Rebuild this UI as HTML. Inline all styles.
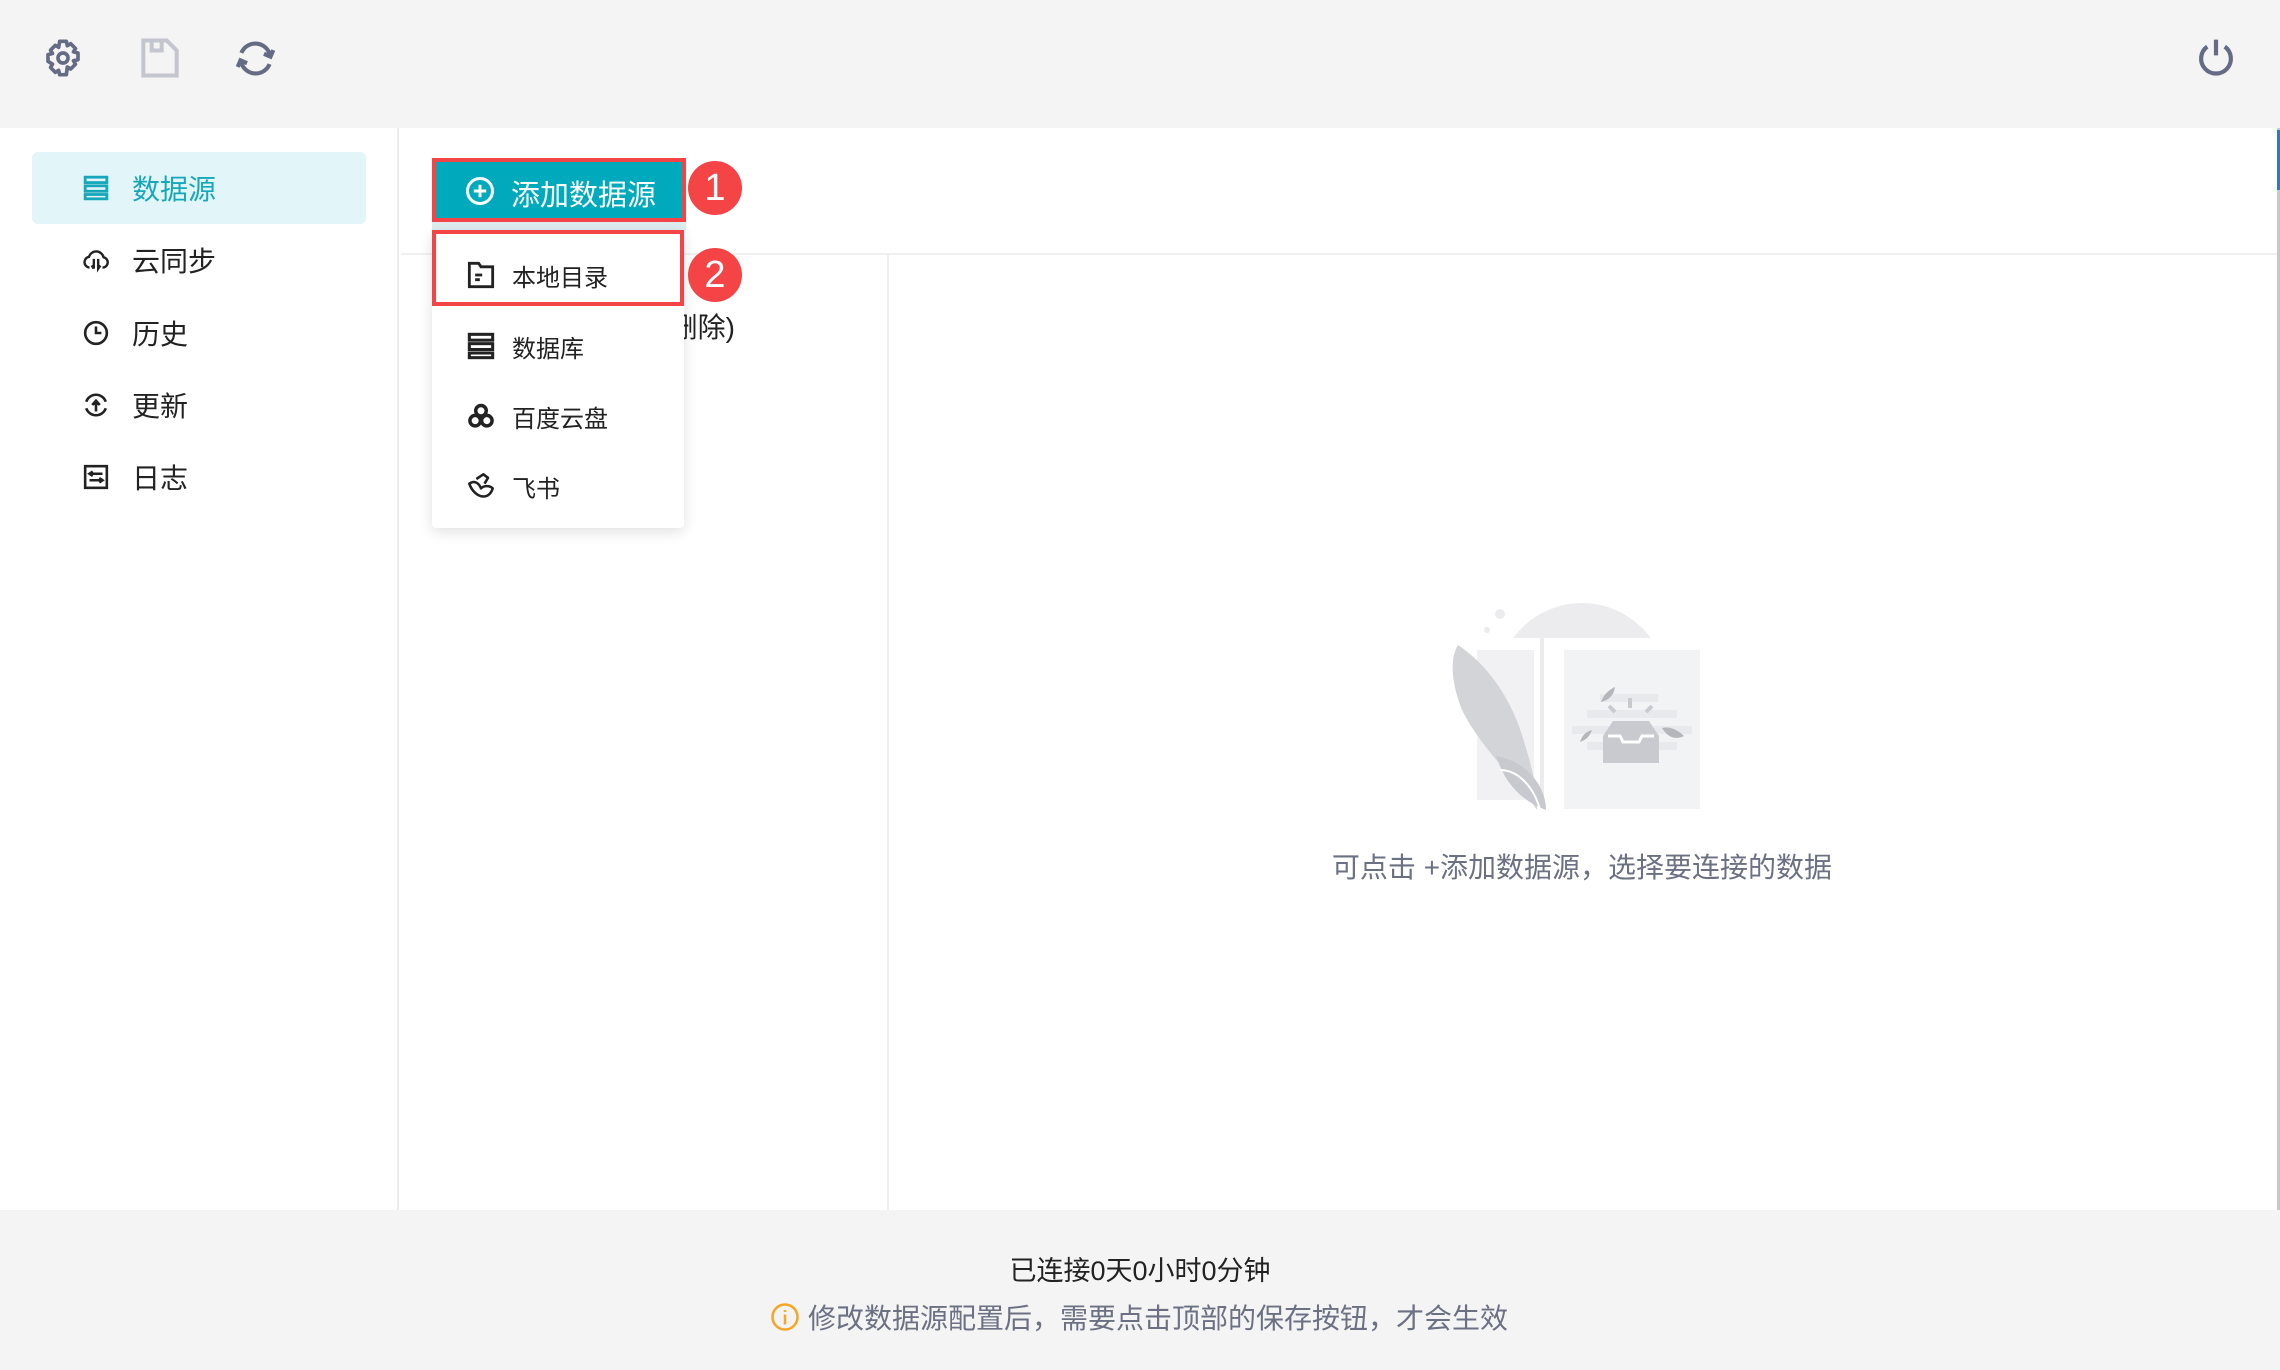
<!DOCTYPE html>
<html><head><meta charset="utf-8"><style>
*{margin:0;padding:0;box-sizing:border-box}
body{width:2280px;height:1370px;overflow:hidden;background:#fff;font-family:"Liberation Sans","Noto Sans CJK SC",sans-serif;position:relative}
.abs{position:absolute}
.hdr{left:0;top:0;width:2280px;height:128px;background:#f4f4f4}
.ftr{left:0;top:1210px;width:2280px;height:160px;background:#f4f4f4}
.side{left:0;top:128px;width:399px;height:1082px;border-right:2px solid #ececec}
.sel{left:32px;top:152px;width:334px;height:72px;background:#e2f5f8;border-radius:6px}
.it{position:absolute;left:83px;height:40px;display:flex;align-items:center;font-size:28px;color:#222}
.it svg{width:26px;height:26px;margin-right:23px}
.dd{left:432px;top:230px;width:252px;height:298px;background:#fff;border-radius:4px;box-shadow:0 4px 14px rgba(0,0,0,.12)}
.di{position:absolute;left:35px;display:flex;align-items:center;font-size:24px;color:#222;height:36px}
.di svg{width:28px;height:28px;margin-right:17px}
.badge{width:54px;height:54px;border-radius:50%;background:#f44446;color:#fff;font-size:38px;text-align:center;line-height:54px}
</style></head><body>
<div class="abs hdr"></div>
<svg class="abs" style="left:43px;top:38px" width="40" height="40" viewBox="0 0 24 24" fill="none" stroke="#656b85" stroke-width="2.2" stroke-linejoin="round"><path d="M10 2h4l.6 2.6 2-1.2 2.9 2.9-1.2 2 2.7.7v4l-2.7.7 1.2 2-2.9 2.9-2-1.2L14 22h-4l-.6-2.6-2 1.2-2.9-2.9 1.2-2L3 14v-4l2.7-.7-1.2-2 2.9-2.9 2 1.2z"/><circle cx="12" cy="12" r="3"/></svg>
<svg class="abs" style="left:140px;top:38px" width="40" height="40" viewBox="0 0 24 24" fill="none" stroke="#c3c5cf" stroke-width="2.4"><path d="M2 1.5h14l6 6V22.5H2z"/><path d="M7 1.5v6h6v-6"/></svg>
<svg class="abs" style="left:233px;top:36px" width="45" height="45" viewBox="0 0 24 24" fill="none" stroke="#656b85" stroke-width="2.2"><path d="M4.5 9A8 8 0 0 1 19.5 9.5"/><path d="M19.5 15A8 8 0 0 1 4.5 14.5"/><path d="M21.5 7.5l-1.5 3.5-3.5-1.5" fill="#656b85"/><path d="M2.5 16.5l1.5-3.5 3.5 1.5" fill="#656b85"/></svg>
<svg class="abs" style="left:2195px;top:37px" width="42" height="42" viewBox="0 0 24 24" fill="none" stroke="#656b85" stroke-width="2.4"><path d="M7 5.5A8.5 8.5 0 1 0 17 5.5"/><path d="M12 1.5v9"/></svg>
<div class="abs" style="left:2277px;top:128px;width:3px;height:1082px;background:#c8c8c8"></div>
<div class="abs" style="left:2277px;top:130px;width:3px;height:60px;background:#2f78c4"></div>

<div class="abs side"></div>
<div class="abs sel"></div>
<div class="it" style="top:168px;color:#17a7ba"><svg viewBox="0 0 24 24" fill="none" stroke="#17a7ba" stroke-width="2.6"><rect x="2" y="2" width="20" height="5"/><rect x="2" y="10" width="20" height="5"/><rect x="2" y="18" width="20" height="4"/></svg>数据源</div>
<div class="it" style="top:240px"><svg viewBox="0 0 24 24" fill="none" stroke="#222" stroke-width="2.2"><path d="M6 19a5 5 0 0 1-.5-9.9A7 7 0 0 1 19 9.5 4.8 4.8 0 0 1 18 19"/><path d="M10 11v9M8 17l2 3M14 11v9l2-3"/></svg>云同步</div>
<div class="it" style="top:313px"><svg viewBox="0 0 24 24" fill="none" stroke="#222" stroke-width="2.4"><circle cx="12" cy="12" r="10"/><path d="M12 6v6h5"/></svg>历史</div>
<div class="it" style="top:385px"><svg viewBox="0 0 24 24" fill="none" stroke="#222" stroke-width="2.4"><path d="M3 9a9.5 9.5 0 0 1 18 0M21 15a9.5 9.5 0 0 1-18 0"/><path d="M12 18V9M8.5 12l3.5-4 3.5 4" fill="#222"/></svg>更新</div>
<div class="it" style="top:457px"><svg viewBox="0 0 24 24" fill="none" stroke="#222" stroke-width="2.4"><rect x="2" y="2" width="20" height="20"/><path d="M6 9h12M6 15h12"/><path d="M9 7l-3 2 3 2M15 13l3 2-3 2"/></svg>日志</div>

<div class="abs" style="left:401px;top:253px;width:1876px;height:2px;background:#f0f0f0"></div>
<div class="abs" style="left:887px;top:255px;width:2px;height:955px;background:#f0f0f0"></div>
<div class="abs" style="left:600px;top:306px;font-size:28px;color:#222;width:135px;text-align:right">(已删除)</div>

<div class="abs" style="left:432px;top:158px;width:254px;height:64px;background:#00aabd;border:4px solid #f44446"></div>
<svg class="abs" style="left:465px;top:176px" width="30" height="30" viewBox="0 0 24 24" fill="none" stroke="#fff" stroke-width="2.4"><circle cx="12" cy="12" r="10"/><path d="M12 7v10M7 12h10"/></svg>
<div class="abs" style="left:511px;top:172px;font-size:29px;color:#fff">添加数据源</div>
<div class="abs" style="left:432px;top:222px;width:254px;height:8px;background:#dcecef"></div>
<div class="abs badge" style="left:688px;top:161px">1</div>

<div class="abs dd">
<div class="di" style="top:27px"><svg viewBox="0 0 24 24" fill="none" stroke="#222" stroke-width="2.4"><path d="M2 2h8l2 3h10v17H2z"/><path d="M7 12h6M7 16h4"/></svg>本地目录</div>
<div class="di" style="top:98px"><svg viewBox="0 0 24 24" fill="none" stroke="#222" stroke-width="2.6"><rect x="2" y="2" width="20" height="5"/><rect x="2" y="10" width="20" height="5"/><rect x="2" y="18" width="20" height="4"/></svg>数据库</div>
<div class="di" style="top:168px"><svg viewBox="0 0 24 24" fill="none" stroke="#222" stroke-width="3"><circle cx="12" cy="7.5" r="4.5"/><circle cx="7" cy="16" r="4.5"/><circle cx="17" cy="16" r="4.5"/></svg>百度云盘</div>
<div class="di" style="top:238px"><svg viewBox="0 0 24 24" fill="none" stroke="#222" stroke-width="2.2" stroke-linejoin="round"><path d="M2 10c2 6 7 11 12 11 4 0 7-3 8-7-3-3-8-2-10 0C10 9 6 7 2 10z"/><path d="M8 6l6-4 4 3-3 5"/></svg>飞书</div>
</div>
<div class="abs" style="left:432px;top:230px;width:252px;height:76px;border:4px solid #f44446"></div>
<div class="abs badge" style="left:688px;top:248px">2</div>

<svg class="abs" style="left:1440px;top:590px" width="280" height="230" viewBox="1440 590 280 230">
<circle cx="1582" cy="688" r="85" fill="#ececee"/>
<circle cx="1500" cy="614" r="5" fill="#ececee"/><circle cx="1487" cy="630" r="3" fill="#ececee"/>
<rect x="1490" y="638" width="175" height="12" fill="#fff"/>
<rect x="1477" y="650" width="57" height="150" fill="#f1f1f3"/>
<rect x="1534" y="638" width="18" height="180" fill="#fff"/>
<rect x="1540" y="638" width="4" height="170" fill="#ececee"/>
<rect x="1552" y="650" width="12" height="170" fill="#fff"/>
<rect x="1564" y="650" width="136" height="159" fill="#f2f3f5"/>
<rect x="1600" y="694" width="58" height="8" fill="#e8e9ec"/>
<rect x="1587" y="710" width="90" height="8" fill="#e8e9ec"/>
<rect x="1572" y="726" width="120" height="8" fill="#e8e9ec"/>
<rect x="1587" y="742" width="90" height="8" fill="#e8e9ec"/>
<path d="M1458 645c30 20 55 55 67 100 8 25 12 45 12 65-20-30-55-60-75-100-10-25-13-50-4-65z" fill="#d3d4d8"/>
<path d="M1496 756c30 5 50 30 50 54-25-10-40-25-50-54z" fill="#c8c9ce"/>
<path d="M1500 770c20 0 35 20 40 40" stroke="#fff" stroke-width="2" fill="none"/>
<path d="M1603 736l10-15h36l10 15v27h-56z" fill="#c9cacf"/>
<path d="M1608 736h12l3 6h16l3-6h12" stroke="#fff" stroke-width="3" fill="none"/>
<path d="M1630 708v-10M1615 712l-6-6M1646 712l6-6" stroke="#c9cacf" stroke-width="4"/>
<path d="M1601 702c2-6 7-12 14-15-1 8-6 13-14 15z" fill="#b5b6bc"/>
<path d="M1662 728c8-2 16 2 22 8-8 4-16 2-22-8z" fill="#b5b6bc"/>
<path d="M1580 742c2-6 5-10 12-12-2 6-6 10-12 12z" fill="#b5b6bc"/>
</svg>
<div class="abs" style="left:1150px;top:846px;width:864px;text-align:center;font-size:28px;color:#6b7083">可点击 +添加数据源，选择要连接的数据</div>

<div class="abs ftr"></div>
<div class="abs" style="left:0;top:1249px;width:2280px;text-align:center;font-size:27px;color:#222">已连接0天0小时0分钟</div>
<div class="abs" style="left:770px;top:1297px;display:flex;align-items:center;font-size:28px;color:#6b7083">
<svg width="30" height="30" viewBox="0 0 24 24" fill="none" stroke="#f5a623" stroke-width="2" style="margin-right:8px"><circle cx="12" cy="12" r="10"/><path d="M12 10v8M12 6.5v1.5"/></svg>修改数据源配置后，需要点击顶部的保存按钮，才会生效</div>
</body></html>
